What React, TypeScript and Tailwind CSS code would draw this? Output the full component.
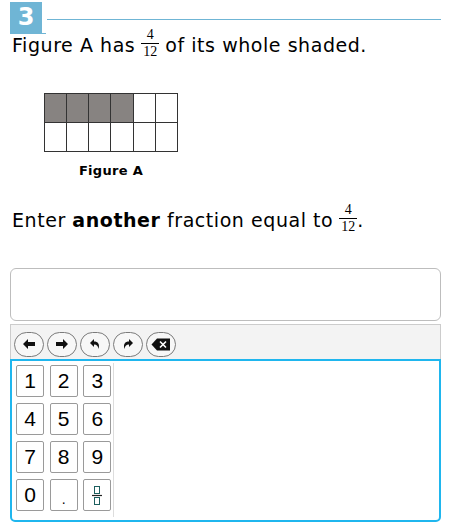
import React from 'react'

function Frac({ num, den }: { num: string; den: string }) {
  return (
    <span className="inline-flex flex-col items-center align-middle mx-[6px] font-['Liberation_Serif',serif] text-[14px] leading-[12px] tracking-normal relative top-[-3px]">
      <span className="px-[2px]">{num}</span>
      <span className="block w-full h-px bg-black my-[2px]" />
      <span className="px-[2px]">{den}</span>
    </span>
  )
}

function RoundBtn({ children }: { children: React.ReactNode }) {
  return (
    <div className="w-[30px] h-[25px] rounded-full border border-[#7a7a7a] bg-[#f7f7f7] flex items-center justify-center">
      {children}
    </div>
  )
}

const keys = ['1', '2', '3', '4', '5', '6', '7', '8', '9', '0', '.', 'frac']

export default function App() {
  return (
    <div className="w-[455px] h-[527px] bg-white font-['DejaVu_Sans',sans-serif] text-black">
      {/* header */}
      <div className="flex items-start pl-[10px] pt-[2px] pr-[14px]">
        <div className="w-[36px] border-b border-[#6fb5d5]">
          <div className="w-[32px] h-[31px] bg-[#6fb5d5] text-white font-bold text-[24px] leading-[31px] text-center">
            3
          </div>
        </div>
        <div className="flex-1 h-px bg-[#6fb5d5] mt-[17px] ml-[1px]" />
      </div>

      <p className="pl-[12px] text-[19px] leading-[24px] tracking-[0.55px] -mt-[2px]">
        Figure A has
        <Frac num="4" den="12" />
        of its whole shaded.
      </p>

      {/* figure */}
      <div className="mt-[32px] ml-[44px] w-[134px]">
        <div className="grid grid-cols-6 border-t border-l border-[#333]">
          {Array.from({ length: 12 }).map((_, i) => (
            <div
              key={i}
              className={`h-[29px] border-r border-b border-[#333] ${i < 4 ? 'bg-[#878381]' : 'bg-white'}`}
            />
          ))}
        </div>
        <div className="text-center font-bold text-[13px] tracking-[0.3px] mt-[9px]">Figure A</div>
      </div>

      <p className="pl-[12px] text-[19px] leading-[24px] tracking-[0.55px] mt-[26px]">
        Enter <b>another</b> fraction equal to
        <Frac num="4" den="12" />
        <span className="-ml-[6px]">.</span>
      </p>

      {/* answer box */}
      <div className="ml-[10px] mr-[14px] mt-[32px] h-[53px] rounded-[6px] border border-[#bdbdbd] bg-white" />

      {/* toolbar */}
      <div className="ml-[10px] mr-[14px] mt-[3px] h-[35px] bg-[#f3f3f3] border border-[#cccccc] border-b-0 flex items-end gap-[3px] pl-[3px] pb-[2px]">
        <RoundBtn>
          <svg width="14" height="12" viewBox="0 0 14 12">
            <path d="M6 1 L1 6 L6 11 L6 8 L13 8 L13 4 L6 4 Z" fill="#111" />
          </svg>
        </RoundBtn>
        <RoundBtn>
          <svg width="14" height="12" viewBox="0 0 14 12">
            <path d="M8 1 L13 6 L8 11 L8 8 L1 8 L1 4 L8 4 Z" fill="#111" />
          </svg>
        </RoundBtn>
        <RoundBtn>
          <svg width="12" height="12" viewBox="0 0 12 12">
            <path d="M5 1 L1 5 L5 9 L5 6.5 C8 6.5 9 8 9.5 11 C11 6 9 3.5 5 3.5 Z" fill="#111" />
          </svg>
        </RoundBtn>
        <RoundBtn>
          <svg width="12" height="12" viewBox="0 0 12 12">
            <path d="M7 1 L11 5 L7 9 L7 6.5 C4 6.5 3 8 2.5 11 C1 6 3 3.5 7 3.5 Z" fill="#111" />
          </svg>
        </RoundBtn>
        <RoundBtn>
          <svg width="20" height="13" viewBox="0 0 20 13">
            <path d="M6 0.5 L19 0.5 L19 12.5 L6 12.5 L0.5 6.5 Z" fill="#111" />
            <path d="M9 3.5 L15 9.5 M15 3.5 L9 9.5" stroke="#fff" strokeWidth="1.6" />
          </svg>
        </RoundBtn>
      </div>

      {/* keypad */}
      <div className="ml-[10px] mr-[14px] h-[163px] border-2 border-[#1fb6ee] rounded-b-[5px] flex pt-[4px] pl-[4px]">
        <div className="grid grid-cols-3 gap-x-[4px] gap-y-[6px] content-start w-[97px]">
          {keys.map((k) => (
            <div
              key={k}
              className="w-[28px] h-[32px] border border-[#9a9a9a] rounded-[2px] bg-white flex items-center justify-center font-['Liberation_Sans',sans-serif] text-[21px]"
            >
              {k === 'frac' ? (
                <svg width="14" height="20" viewBox="0 0 14 20">
                  <rect x="4.5" y="1.5" width="5" height="7" fill="none" stroke="#1d5f5f" strokeWidth="1" />
                  <line x1="2" y1="10.5" x2="12" y2="10.5" stroke="#222" strokeWidth="1.2" />
                  <rect x="4.5" y="12.5" width="5" height="7" fill="none" stroke="#1d5f5f" strokeWidth="1" />
                </svg>
              ) : k === '.' ? (
                <span className="text-[14px] mt-[10px] text-black">.</span>
              ) : (
                k
              )}
            </div>
          ))}
        </div>
        <div className="w-px bg-[#dddddd] mt-[-2px] mb-[3px]" />
      </div>
    </div>
  )
}
